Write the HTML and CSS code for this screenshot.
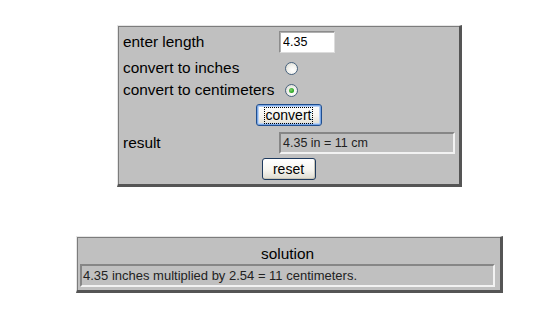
FILE: index.html
```html
<!DOCTYPE html>
<html>
<head>
<meta charset="utf-8">
<link rel="stylesheet" href="styles.css">
</head>
<body>
<div class="page">
  <form class="panel converter">
    <label class="label" for="len">enter length</label>
    <div class="cell"><input id="len" class="textbox" type="text" value="4.35"></div>
    <label class="label" for="r1">convert to inches</label>
    <div class="cell"><input id="r1" class="radio" type="radio" name="unit"></div>
    <label class="label" for="r2">convert to centimeters</label>
    <div class="cell"><input id="r2" class="radio" type="radio" name="unit" checked></div>
    <div class="btnrow"><button type="button" class="btn focused"><span class="focusring">convert</span></button></div>
    <div class="label">result</div>
    <div class="cell"><div class="readout">4.35 in = 11 cm</div></div>
    <div class="btnrow"><button type="button" class="btn reset">reset</button></div>
  </form>

  <div class="panel solution">
    <div class="sol-title">solution</div>
    <div class="readout sol-text">4.35 inches multiplied by 2.54 = 11 centimeters.</div>
  </div>
</div>
</body>
</html>
```
FILE: styles.css
```css
html, body {
  margin: 0;
  padding: 0;
  background: #ffffff;
}
.page {
  display: flex;
  flex-direction: column;
  align-items: flex-start;
  padding: 25px 0 0 0;
  font-family: "Liberation Sans", Arial, sans-serif;
  color: #000;
}
.panel {
  background: #c0c0c0;
  border-style: solid;
  border-width: 1px 3px 3px 1px;
  border-color: #e6e6e6 #555555 #555555 #e6e6e6;
  box-shadow: inset 1px 1px 0 #7c7c7c;
  box-sizing: border-box;
}
.converter {
  margin: 0 0 0 117px;
  width: 345px;
  height: 162px;
  padding: 3px 4px 1px 5px;
  display: grid;
  grid-template-columns: 156px 176px;
  grid-template-rows: 26px 26px 18px 32px 24px 28px;
  align-items: center;
}
.label {
  font-size: 15.4px;
  line-height: 18px;
  white-space: nowrap;
}
.cell {
  display: flex;
  align-items: center;
}
.textbox {
  box-sizing: border-box;
  width: 56px;
  height: 22px;
  margin: 0;
  padding: 0 3px;
  font-family: "Liberation Sans", Arial, sans-serif;
  font-size: 12.5px;
  color: #000;
  background: #fff;
  border-style: solid;
  border-width: 1px;
  border-color: #8c8c8c #dcdcdc #dcdcdc #8c8c8c;
  box-shadow: inset 1px 1px 0 #b0b0b0;
  outline: none;
}
.radio {
  appearance: none;
  -webkit-appearance: none;
  box-sizing: border-box;
  width: 13px;
  height: 13px;
  margin: 0 0 0 6px;
  border-radius: 50%;
  border: 1px solid #47627e;
  background: radial-gradient(circle at 60% 65%, #ffffff 0, #f2f2ee 45%, #d6d4c8 100%);
  position: relative;
}
.radio:checked::after {
  content: "";
  position: absolute;
  left: 3px;
  top: 3px;
  width: 5px;
  height: 5px;
  border-radius: 50%;
  background: radial-gradient(circle at 40% 40%, #7cd36b 0, #24a11e 70%);
}
.btnrow {
  grid-column: 1 / 3;
  display: flex;
  justify-content: center;
  align-items: center;
  margin-left: -1px;
}
.btn {
  box-sizing: border-box;
  height: 22px;
  margin: 0;
  padding: 0 6px;
  font-family: "Liberation Sans", Arial, sans-serif;
  font-size: 14px;
  line-height: 16px;
  color: #000;
  border: 1px solid #1e3a5e;
  border-radius: 3px;
  background: linear-gradient(#ffffff 0%, #f6f5f0 55%, #dedbd0 100%);
  box-shadow: inset -1px -1px 0 #c9c6b8;
}
.focused {
  width: 66px;
  padding: 0 3px;
  border-color: #1f4e8f;
  box-shadow: inset 0 0 0 1px #7aa7e6, inset 0 0 0 2px #b9d2f5;
}
.focusring {
  display: inline-block;
  padding: 0 1px;
  outline: 1px dotted #000;
  outline-offset: 0;
  line-height: 15px;
}
.reset {
  width: 54px;
}
.readout {
  box-sizing: border-box;
  width: 176px;
  height: 22px;
  padding: 0 2px;
  font-size: 12.5px;
  line-height: 18px;
  color: #222;
  background: #c0c0c0;
  border-style: solid;
  border-width: 2px;
  border-color: #868686 #f2f2f2 #f2f2f2 #868686;
  white-space: nowrap;
}
.solution {
  margin: 49px 0 0 76px;
  width: 427px;
  height: 57px;
  padding: 2px 5px 3px 3px;
  display: flex;
  flex-direction: column;
}
.sol-title {
  font-size: 15.4px;
  line-height: 18px;
  height: 28px;
  box-sizing: border-box;
  padding-top: 6px;
  text-align: center;
}
.sol-text {
  width: 100%;
  height: 23px;
  padding: 1px 1px 0;
  font-size: 13px;
}
```
